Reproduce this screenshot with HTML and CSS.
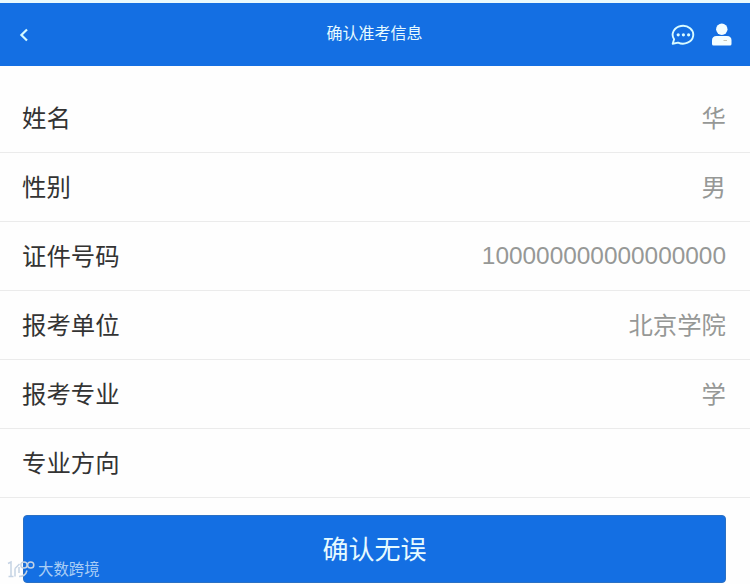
FILE: index.html
```html
<!DOCTYPE html>
<html lang="zh-CN">
<head>
<meta charset="utf-8">
<title>确认准考信息</title>
<link rel="stylesheet" href="styles.css">
</head>
<body>
<header class="bar">
  <svg class="back" viewBox="0 0 10 14"><path d="M8 1.5 2.4 7 8 12.5"/></svg>
  <h1 class="title">确认准考信息</h1>
  <div class="actions">
    <svg class="chat" viewBox="0 0 24 22">
      <path d="M3.1 15.3A10.3 8.9 0 1 1 7.1 18.6L1.7 19.8Z"/>
      <circle cx="7.2" cy="10.8" r="1.6"/><circle cx="12.4" cy="10.8" r="1.6"/><circle cx="17.6" cy="10.8" r="1.6"/>
    </svg>
    <svg class="user" viewBox="0 0 20 23"><circle cx="9.8" cy="6.2" r="5.7"/><path d="M0 21V17.5Q0 13 4.5 13H15Q19.5 13 19.5 17.5V21Q19.5 22.5 18 22.5H1.5Q0 22.5 0 21Z"/><path class="mark" d="M11.5 17.5H15"/></svg>
  </div>
</header>
<main>
  <dl class="list">
    <div class="row"><dt>姓名</dt><dd>华</dd></div>
    <div class="row"><dt>性别</dt><dd>男</dd></div>
    <div class="row"><dt>证件号码</dt><dd class="number">100000000000000000</dd></div>
    <div class="row"><dt>报考单位</dt><dd>北京学院</dd></div>
    <div class="row"><dt>报考专业</dt><dd>学</dd></div>
    <div class="row"><dt>专业方向</dt><dd></dd></div>
  </dl>
  <button class="confirm" type="button">确认无误</button>
</main>
<div class="watermark">
  <svg viewBox="0 0 28 20"><path d="M1 5.5 4 4V18.5M1.5 18.5H6.5M8 18.5V10.5M8 10.5 12.5 6M12 9V15M12 18.5Q18.5 18.5 20 12.5"/><circle cx="17" cy="7" r="3.1"/><circle cx="23.7" cy="7" r="3.1"/></svg>
  <span>大数跨境</span>
</div>
</body>
</html>
```
FILE: styles.css
```css
* { box-sizing: border-box; }
body {
  margin: 0;
  height: 584px;
  overflow: hidden;
  position: relative;
  background: #fefefe;
  font-family: "Liberation Sans", "Noto Sans CJK SC", sans-serif;
}
.bar {
  height: 66px;
  border-top: 3px solid #e9f9fd;
  background: #146fe3;
  display: grid;
  grid-template-columns: 1fr auto 1fr;
  align-items: center;
  padding: 0 18px 0 19px;
}
.back { width: 10px; height: 14px; fill: none; stroke: #d3faff; stroke-width: 2.2; }
.title { margin: 0 2px 0 0; font-size: 16px; line-height: 24px; font-weight: 400; color: #e6faff; padding-bottom: 2px; }
.actions { display: flex; justify-content: flex-end; align-items: center; gap: 17px; }
.chat { width: 24px; height: 22px; fill: none; stroke: #d9fbff; stroke-width: 1.9; stroke-linejoin: round; }
.chat circle { fill: #d9fbff; stroke: none; }
.user { width: 20px; height: 23px; fill: #f4feff; }
.user .mark { stroke: #c8c5b5; stroke-width: 1; }
.list { margin: 0; padding-top: 18px; }
.row {
  height: 69px;
  border-bottom: 1px solid #ebebeb;
  padding: 2px 24px 0 22px;
  display: flex;
  align-items: center;
  justify-content: space-between;
  font-size: 24.4px;
  line-height: 36px;
}
.row dt { color: #333; }
.row dd { margin: 0; color: #969896; }
.row .number { padding-bottom: 2px; }
.confirm {
  display: block;
  width: 703px;
  height: 68px;
  margin: 17px 0 0 23px;
  padding: 2px 0 0;
  border: 1px solid #2a70c4;
  border-radius: 4px;
  background: #146fe3;
  color: #e6faff;
  font: 26px/38px "Liberation Sans", "Noto Sans CJK SC", sans-serif;
}
.watermark {
  position: absolute;
  left: 7px;
  top: 558px;
  display: flex;
  align-items: center;
  gap: 3px;
  color: #a9cdf5;
  font-size: 15.4px;
  line-height: 24px;
}
.watermark svg { width: 28px; height: 20px; margin-top: -4px; fill: none; stroke: #c5d3e4; stroke-width: 1.5; }
```
